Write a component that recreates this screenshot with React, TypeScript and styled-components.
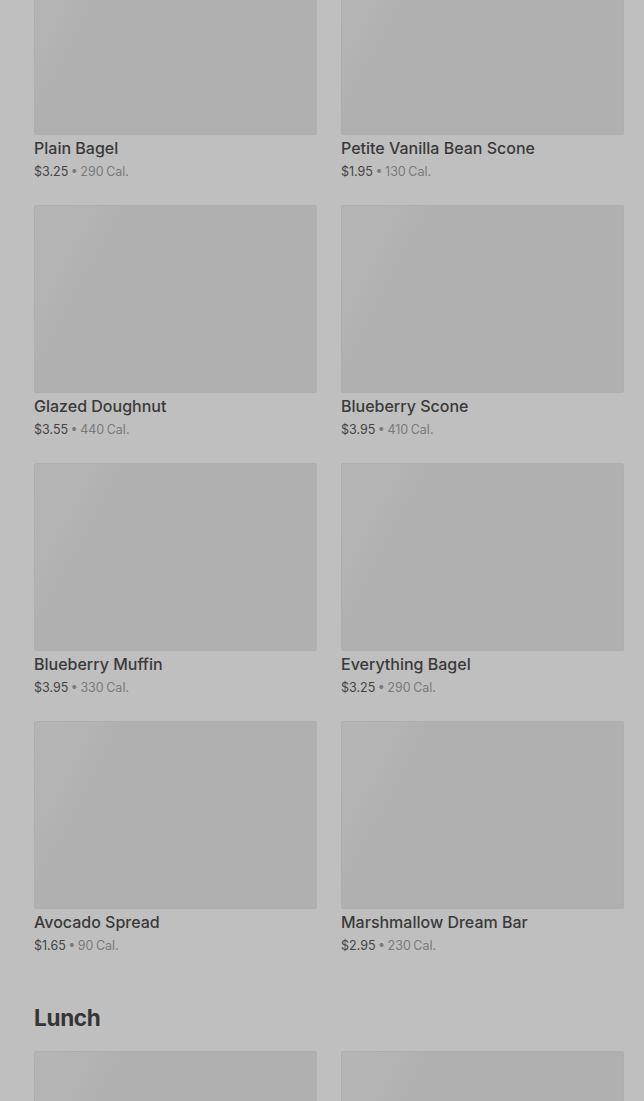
import React from 'react'
import styled, { createGlobalStyle } from 'styled-components'

const GlobalStyle = createGlobalStyle`
  html, body {
    margin: 0;
    padding: 0;
    background: #bfbfbf;
    font-family: Inter, Roboto, "Liberation Sans", Arial, sans-serif;
    overflow: hidden;
  }
`

interface MenuItem {
  name: string
  price: string
  cal: number
}

const breakfast: MenuItem[] = [
  { name: 'Plain Bagel', price: '$3.25', cal: 290 },
  { name: 'Petite Vanilla Bean Scone', price: '$1.95', cal: 130 },
  { name: 'Glazed Doughnut', price: '$3.55', cal: 440 },
  { name: 'Blueberry Scone', price: '$3.95', cal: 410 },
  { name: 'Blueberry Muffin', price: '$3.95', cal: 330 },
  { name: 'Everything Bagel', price: '$3.25', cal: 290 },
  { name: 'Avocado Spread', price: '$1.65', cal: 90 },
  { name: 'Marshmallow Dream Bar', price: '$2.95', cal: 230 },
]

const Page = styled.div`
  padding: 0 20px 0 34px;
  margin-top: -53px; /* scrolled position */
`

const Section = styled.section`
  & + & {
    margin-top: 48px;
  }
`

const SectionTitle = styled.h2`
  margin: 0 0 18px;
  font-size: 22.5px;
  line-height: 30px;
  font-weight: 700;
  color: #353535;
  letter-spacing: -0.3px;
`

const Grid = styled.div`
  display: grid;
  grid-template-columns: 283px 283px;
  column-gap: 24px;
  row-gap: 24px;
`

const Card = styled.div`
  display: flex;
  flex-direction: column;
`

const Thumb = styled.div`
  height: 188px;
  box-sizing: border-box;
  border: 1px solid #aeaeae;
  border-radius: 2px;
  background: linear-gradient(118deg, #b5b5b5 0%, #b4b4b4 14%, #b0b0b0 24%, #b0b0b0 100%);
`

const Name = styled.div`
  margin-top: 3px;
  font-size: 16px;
  line-height: 20px;
  font-weight: 500;
  color: #3a3a3a;
`

const Meta = styled.div`
  margin-top: 5px;
  font-size: 12.5px;
  line-height: 18px;
  color: #7a7a7a;
  word-spacing: -1px;
`

const Price = styled.span`
  color: #444;
`

const ItemCard: React.FC<{ item: MenuItem }> = ({ item }) => (
  <Card>
    <Thumb />
    <Name>{item.name}</Name>
    <Meta>
      <Price>{item.price}</Price> • {item.cal} Cal.
    </Meta>
  </Card>
)

export default function App() {
  return (
    <>
      <GlobalStyle />
      <Page>
        <Section>
          <Grid>
            {breakfast.map((item) => (
              <ItemCard key={item.name} item={item} />
            ))}
          </Grid>
        </Section>
        <Section>
          <SectionTitle>Lunch</SectionTitle>
          <Grid>
            <Card>
              <Thumb />
            </Card>
            <Card>
              <Thumb />
            </Card>
          </Grid>
        </Section>
      </Page>
    </>
  )
}
